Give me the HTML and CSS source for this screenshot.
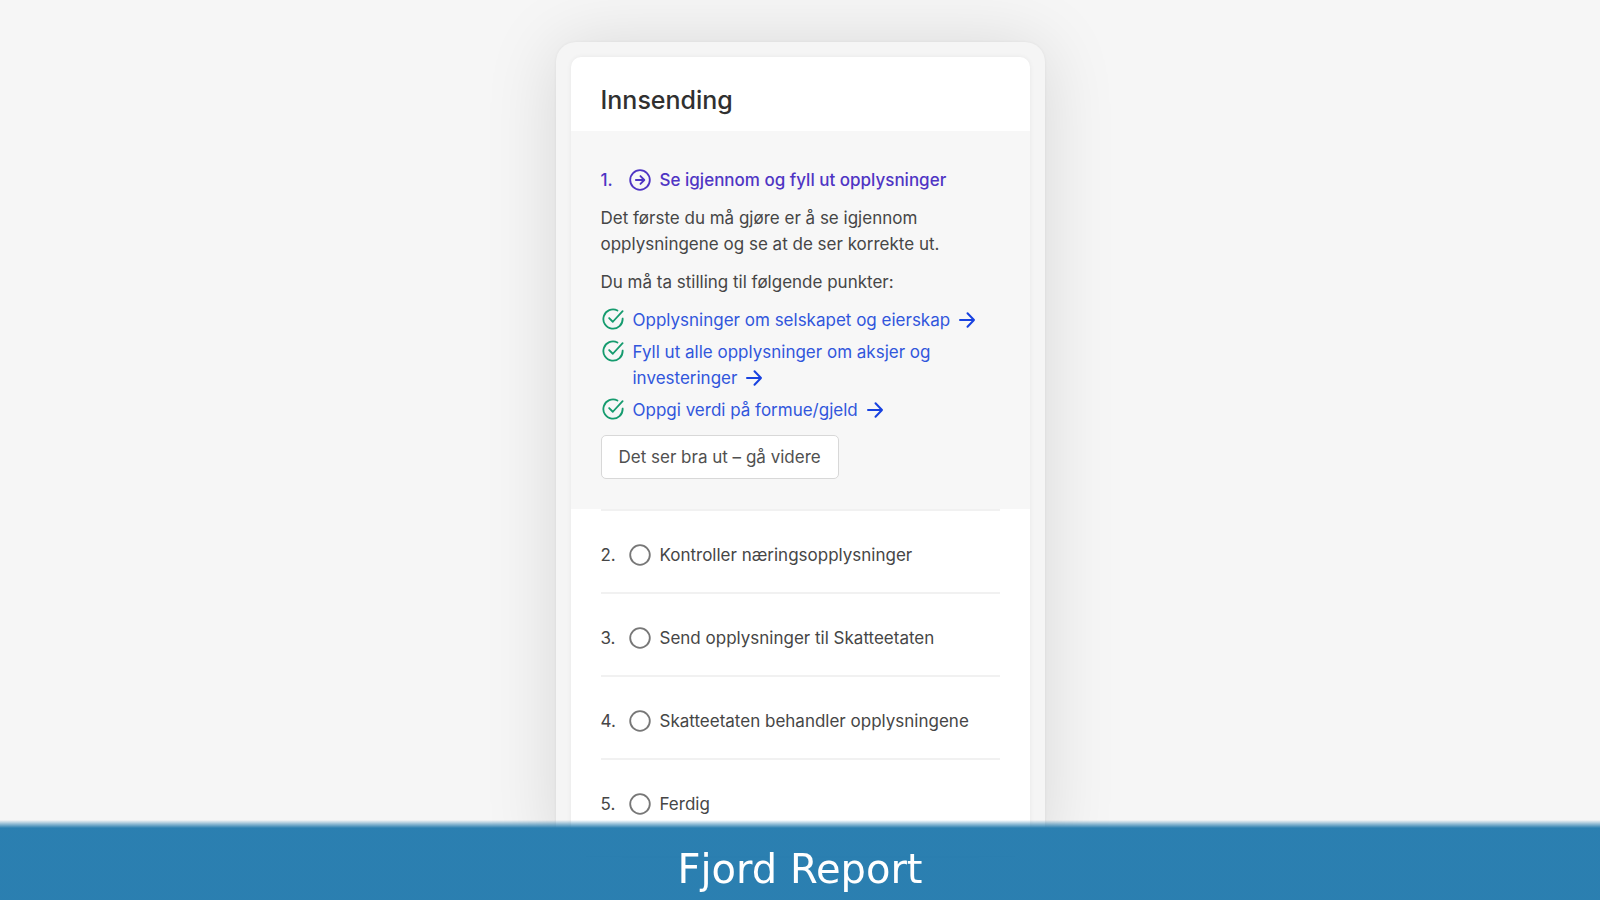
FILE: index.html
```html
<!DOCTYPE html>
<html lang="nb">
<head>
<meta charset="utf-8">
<meta name="viewport" content="width=device-width, initial-scale=1">
<title>Fjord Report</title>
<link rel="stylesheet" href="styles.css">
</head>
<body>
<svg class="sprite" aria-hidden="true">
  <symbol id="check" viewBox="0 0 24 24"><path d="M22.500 11.500A10.500 10.500 0 1 1 16.800 2.700"/><path d="M7.800 11l4 4L22.500 3.500"/></symbol>
  <symbol id="arrow" viewBox="0 0 18 18"><path d="M2 9h14M9.500 2.200L16 9l-6.500 6.800"/></symbol>
  <symbol id="current" viewBox="0 0 24 24"><circle cx="12" cy="12" r="10.700"/><path d="M7.500 12h9M12.500 7.700l4.200 4.300-4.200 4.300"/></symbol>
  <symbol id="pending" viewBox="0 0 24 24"><circle cx="12" cy="12" r="10.700"/></symbol>
</svg>
<main class="frame">
  <section class="card">
    <h1 class="card-title">Innsending</h1>
    <ol class="steps">
      <li class="step step-active">
        <h2 class="step-head"><span class="number">1.</span><svg class="icon"><use href="#current"/></svg><span>Se igjennom og fyll ut opplysninger</span></h2>
        <p>Det første du må gjøre er å se igjennom opplysningene og se at de ser korrekte ut.</p>
        <p>Du må ta stilling til følgende punkter:</p>
        <ul class="tasks">
          <li class="task"><svg class="icon check"><use href="#check"/></svg><a href="#">Opplysninger om selskapet og eierskap<svg class="arrow"><use href="#arrow"/></svg></a></li>
          <li class="task"><svg class="icon check"><use href="#check"/></svg><a href="#">Fyll ut alle opplysninger om aksjer og investeringer<svg class="arrow"><use href="#arrow"/></svg></a></li>
          <li class="task"><svg class="icon check"><use href="#check"/></svg><a href="#">Oppgi verdi på formue/gjeld<svg class="arrow"><use href="#arrow"/></svg></a></li>
        </ul>
        <button class="next" type="button">Det ser bra ut – gå videre</button>
      </li>
      <li class="step"><h2 class="step-head"><span class="number">2.</span><svg class="icon pending"><use href="#pending"/></svg><span>Kontroller næringsopplysninger</span></h2></li>
      <li class="step"><h2 class="step-head"><span class="number">3.</span><svg class="icon pending"><use href="#pending"/></svg><span>Send opplysninger til Skatteetaten</span></h2></li>
      <li class="step"><h2 class="step-head"><span class="number">4.</span><svg class="icon pending"><use href="#pending"/></svg><span>Skatteetaten behandler opplysningene</span></h2></li>
      <li class="step"><h2 class="step-head"><span class="number">5.</span><svg class="icon pending"><use href="#pending"/></svg><span>Ferdig</span></h2></li>
    </ol>
  </section>
</main>
<footer class="banner">Fjord Report</footer>
</body>
</html>
```
FILE: styles.css
```css
* { box-sizing: border-box; }
body {
  margin: 0;
  padding: 42px 16px;
  background: #f6f6f6;
  color: #464646;
  font: 17px/26px Inter, "Liberation Sans", sans-serif;
}
h1, h2, p, ul, ol { margin: 0; padding: 0; list-style: none; }
.sprite { position: absolute; width: 0; height: 0; }
svg { fill: none; stroke: currentColor; stroke-width: 2; stroke-linecap: round; stroke-linejoin: round; }
.frame {
  max-width: 489px;
  margin: 0 auto;
  padding: 15px;
  border-radius: 20px;
  background: #f5f5f5;
  box-shadow: 0 0 3px rgba(0, 0, 0, .06), 0 4px 72px rgba(0, 0, 0, .13);
}
.card {
  overflow: hidden;
  border-radius: 10px;
  background: #fff;
  box-shadow: 0 0 5px rgba(0, 0, 0, .06);
}
.card-title {
  padding: 27px 30px 15px;
  color: #303030;
  font-size: 25px;
  font-weight: 500;
  line-height: 32px;
}
.step { margin: 0 30px; padding: 30px 0 24px; }
.step + .step { border-top: 2px solid #f1f1f1; }
.step-head {
  display: flex;
  align-items: center;
  min-height: 27px;
  font-size: inherit;
  font-weight: 400;
}
.step-active {
  display: flex;
  flex-direction: column;
  align-items: flex-start;
  gap: 12px;
  margin: 0;
  padding: 36px 30px 30px;
  background: #f7f7f7;
}
.step-active .step-head { color: #4f35c4; font-weight: 500; min-height: 26px; }
.number { width: 27px; }
.icon { flex: none; width: 24px; height: 24px; padding: 1px; margin-right: 8px; }
.pending { color: #777; }
.tasks { display: flex; flex-direction: column; gap: 6px; }
.task { display: flex; }
.check { color: #159b6e; }
.task a { color: #3156dc; text-decoration: none; }
.arrow { width: 18px; height: 18px; margin-left: 8px; vertical-align: -3px; color: #1842e0; }
.next {
  padding: 8px 17px;
  border: 1px solid #d8d8d8;
  border-radius: 5px;
  background: #fff;
  color: #505050;
  font: inherit;
}
.banner {
  position: fixed;
  inset: auto 0 0;
  padding: 22px 16px 4px;
  background: linear-gradient(rgba(36, 123, 174, 0), rgba(36, 123, 174, .97) 8px);
  color: #fff;
  font: 40px/54px "DejaVu Sans", sans-serif;
  text-align: center;
}
```
